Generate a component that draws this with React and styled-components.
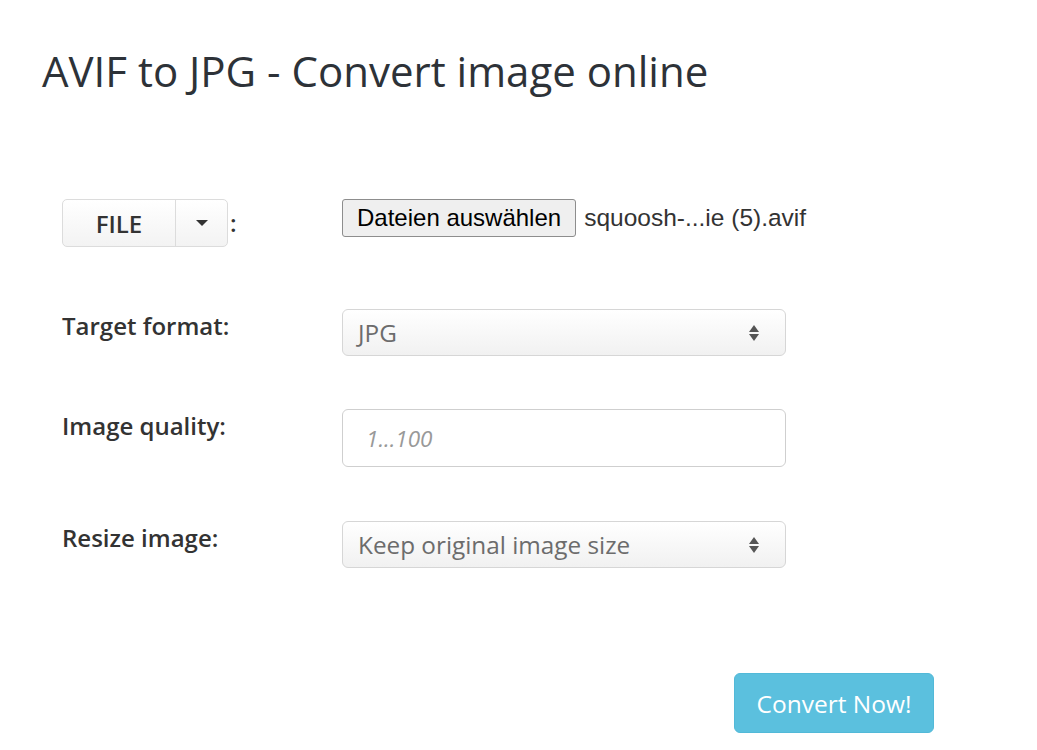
import styled, { createGlobalStyle } from "styled-components";

const GlobalStyle = createGlobalStyle`
  body {
    margin: 0;
    background: #fff;
    font-family: "Open Sans", "Liberation Sans", sans-serif;
    color: #333;
  }
`;

const Page = styled.div`
  padding: 46px 42px 0;
`;

const Title = styled.h1`
  margin: 0;
  font-size: 42px;
  font-weight: 400;
  line-height: 1.2;
  color: #2d3238;
`;

const Form = styled.form`
  margin-top: 103px;
  padding-left: 20px;
  display: grid;
  grid-template-columns: 280px 444px;
`;

const Label = styled.div`
  display: flex;
  align-items: flex-start;
  height: ${({ $h }) => $h}px;
  margin-top: ${({ $gap = 0 }) => $gap}px;
  font-size: 24px;
  font-weight: 600;
  line-height: 1.4;
  color: #333;
`;

const Cell = styled.div`
  display: flex;
  align-items: flex-start;
  height: ${({ $h }) => $h}px;
  margin-top: ${({ $gap = 0 }) => $gap}px;
`;

const SourceRow = styled.div`
  display: flex;
  align-items: center;
`;

const SplitButton = styled.div`
  box-sizing: border-box;
  display: flex;
  height: 48px;
  border: 1px solid #dcdcdc;
  border-radius: 5px;
  background: linear-gradient(#fff, #f3f3f3);
  overflow: hidden;
`;

const SplitPart = styled.button`
  border: none;
  background: transparent;
  font-family: "Open Sans", sans-serif;
  font-size: 24px;
  font-weight: 600;
  color: #333;
  width: ${({ $w }) => $w}px;
  padding: 0;
  display: flex;
  align-items: center;
  justify-content: center;
  & + & {
    border-left: 1px solid #dcdcdc;
  }
`;

const Caret = styled.span`
  width: 0;
  height: 0;
  border-left: 6px solid transparent;
  border-right: 6px solid transparent;
  border-top: 6px solid #333;
`;

const Colon = styled.span`
  margin-left: 2px;
  margin-top: -2px;
  font-size: 24px;
  font-weight: 600;
`;

const FileRow = styled.div`
  display: flex;
  align-items: center;
  flex: none;
  white-space: nowrap;
`;

const NativeButton = styled.span`
  display: inline-block;
  height: 38px;
  box-sizing: border-box;
  padding: 0 14px;
  line-height: 36px;
  background: #efefef;
  border: 1px solid #8d8d8d;
  border-radius: 3px;
  font-family: "Liberation Sans", Arial, sans-serif;
  font-size: 24px;
  color: #000;
`;

const FileName = styled.span`
  margin-left: 8px;
  font-family: "Liberation Sans", Arial, sans-serif;
  font-size: 24.5px;
  line-height: 38px;
  color: #333;
`;

const Select = styled.div`
  box-sizing: border-box;
  width: 444px;
  height: 47px;
  border: 1px solid #d6d6d6;
  border-radius: 6px;
  background: linear-gradient(#fff, #f1f1f1);
  display: flex;
  align-items: center;
  justify-content: space-between;
  padding: 0 25px 0 15px;
  font-size: 24.3px;
  color: #6c6c6c;
`;

const Arrows = styled.svg`
  width: 12px;
  height: 20px;
`;

const Input = styled.input`
  box-sizing: border-box;
  width: 444px;
  height: 58px;
  border: 1px solid #cfcfcf;
  border-radius: 6px;
  background: #fff;
  padding: 0 23px;
  font-family: "Open Sans", sans-serif;
  font-size: 22.5px;
  &::placeholder {
    font-style: italic;
    color: #999;
  }
`;

const ButtonRow = styled.div`
  grid-column: 1 / -1;
  display: flex;
  padding-left: 672px;
  margin-top: 105px;
`;

const ConvertButton = styled.button`
  flex: none;
  width: 200px;
  height: 60px;
  border: 1px solid #52b9d8;
  border-radius: 6px;
  background: #5bc0de;
  color: #fff;
  font-family: "Open Sans", sans-serif;
  font-size: 24.5px;
  padding: 0;
`;

const SelectArrows = () => (
  <Arrows viewBox="0 0 12 20">
    <path d="M6 2 L11 9 H1 Z" fill="#555" />
    <path d="M1 11 H11 L6 18 Z" fill="#555" />
  </Arrows>
);

export default function App() {
  return (
    <>
      <GlobalStyle />
      <Page>
        <Title>AVIF to JPG - Convert image online</Title>
        <Form onSubmit={(e) => e.preventDefault()}>
          <Label $h={110}>
            <SourceRow>
              <SplitButton>
                <SplitPart type="button" $w={112}>FILE</SplitPart>
                <SplitPart type="button" $w={52}>
                  <Caret />
                </SplitPart>
              </SplitButton>
              <Colon>:</Colon>
            </SourceRow>
          </Label>
          <Cell $h={110}>
            <FileRow>
              <NativeButton>Dateien auswählen</NativeButton>
              <FileName>squoosh-...ie (5).avif</FileName>
            </FileRow>
          </Cell>

          <Label $h={47}>Target format:</Label>
          <Cell $h={47}>
            <Select>
              JPG
              <SelectArrows />
            </Select>
          </Cell>

          <Label $h={58} $gap={53}>Image quality:</Label>
          <Cell $h={58} $gap={53}>
            <Input placeholder="1...100" />
          </Cell>

          <Label $h={47} $gap={54}>Resize image:</Label>
          <Cell $h={47} $gap={54}>
            <Select>
              Keep original image size
              <SelectArrows />
            </Select>
          </Cell>

          <ButtonRow>
            <ConvertButton type="submit">Convert Now!</ConvertButton>
          </ButtonRow>
        </Form>
      </Page>
    </>
  );
}
